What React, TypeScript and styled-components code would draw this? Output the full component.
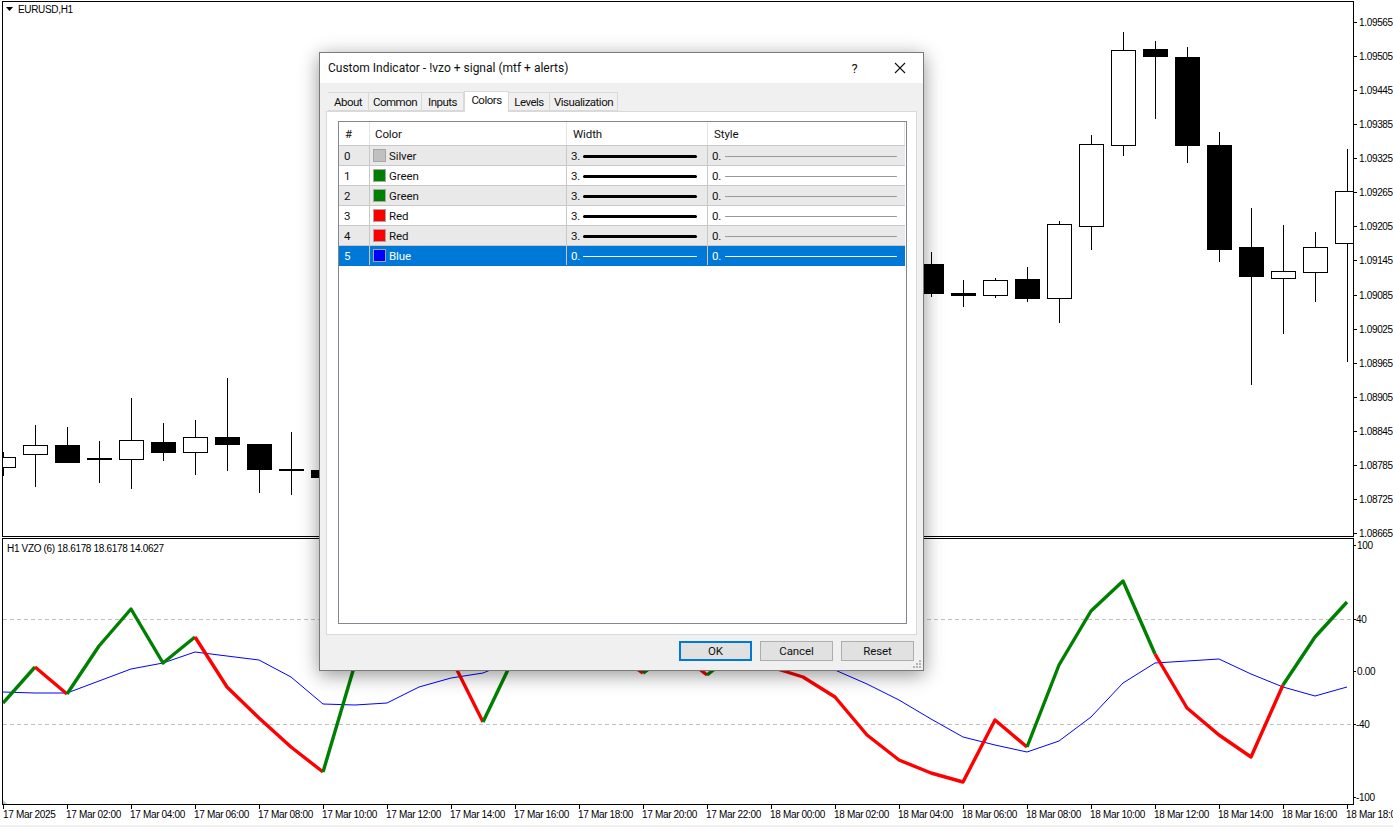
import React from 'react';
import styled, { createGlobalStyle } from 'styled-components';

const GlobalStyle = createGlobalStyle`
  html, body {
    margin: 0;
    padding: 0;
    background: #ffffff;
  }
`;

const UI_FONT = `Roboto, 'Noto Sans', 'Liberation Sans', sans-serif`;
const CHART_FONT = `'Liberation Sans', Arial, sans-serif`;

const Page = styled.div`
  position: relative;
  width: 1393px;
  height: 827px;
  overflow: hidden;
  background: #ffffff;
  display: flex;
  flex-direction: column;
`;

const ChartSvg = styled.svg`
  display: block;
  flex: none;
  text {
    font-family: ${CHART_FONT};
    font-size: 10px;
    letter-spacing: -0.33px;
    fill: #000000;
  }
`;

const BottomStrip = styled.div`
  flex: 1;
  background: #f0f0f0;
`;

const Dialog = styled.div`
  position: absolute;
  left: 319px;
  top: 52px;
  width: 605px;
  height: 619px;
  box-sizing: border-box;
  border: 1px solid #7a7a7a;
  background: #f0f0f0;
  box-shadow: 0 4px 18px rgba(0, 0, 0, 0.42);
  display: flex;
  flex-direction: column;
  font-family: ${UI_FONT};
  font-size: 11.5px;
  letter-spacing: -0.1px;
  color: #111111;
`;

const TitleBar = styled.div`
  height: 30px;
  flex: none;
  background: #ffffff;
  display: flex;
  align-items: center;
  padding-left: 8px;
`;

const Title = styled.div`
  flex: 1;
  font-size: 12px;
  letter-spacing: 0;
`;

const Help = styled.div`
  width: 45px;
  text-align: center;
  font-size: 13px;
`;

const CloseBox = styled.div`
  width: 45px;
  display: flex;
  justify-content: center;
  margin-right: 1px;
`;

const Tabs = styled.div`
  display: flex;
  align-items: flex-end;
  height: 28px;
  flex: none;
  padding-left: 8px;
  position: relative;
  z-index: 1;
`;

const Tab = styled.div<{ $active?: boolean; $w: number }>`
  box-sizing: border-box;
  width: ${p => p.$w}px;
  height: ${p => (p.$active ? 21 : 19)}px;
  margin-bottom: ${p => (p.$active ? -1 : 0)}px;
  padding-bottom: ${p => (p.$active ? 4 : 0)}px;
  letter-spacing: -0.5px;
  background: ${p => (p.$active ? '#ffffff' : '#f0f0f0')};
  border: 1px solid #d9d9d9;
  border-bottom: ${p => (p.$active ? 'none' : '1px solid #d9d9d9')};
  border-left: ${p => (p.$active ? '1px solid #d9d9d9' : 'none')};
  display: flex;
  align-items: center;
  justify-content: center;
`;

const TabPanel = styled.div`
  margin: 0 6px;
  height: 524px;
  flex: none;
  box-sizing: border-box;
  background: #ffffff;
  border: 1px solid #d9d9d9;
  padding: 9px 9px 10px 11px;
  display: flex;
`;

const ListBox = styled.div`
  flex: 1;
  box-sizing: border-box;
  border: 1px solid #828790;
  background: #ffffff;
  padding-right: 1px;
`;

const Row = styled.div<{ $bg?: string; $head?: boolean; $selected?: boolean }>`
  display: grid;
  grid-template-columns: 31px 197px 141px 1fr;
  height: ${p => (p.$head ? 24 : 20)}px;
  box-sizing: border-box;
  border-bottom: 1px solid ${p => (p.$selected ? '#0078d7' : '#c8c8c8')};
  background: ${p => (p.$selected ? '#0078d7' : p.$bg || '#ffffff')};
  color: ${p => (p.$selected ? '#ffffff' : '#111111')};
`;

const Cell = styled.div<{ $pad: number; $head?: boolean }>`
  display: flex;
  align-items: center;
  padding-left: ${p => p.$pad}px;
  border-right: 1px solid ${p => (p.$head ? '#e5e5e5' : '#c8c8c8')};
  min-width: 0;
`;

const LastCell = styled(Cell)`
  border-right: ${p => (p.$head ? '1px solid #e5e5e5' : 'none')};
`;

const Swatch = styled.span<{ $color: string }>`
  width: 13px;
  height: 13px;
  box-sizing: border-box;
  flex: none;
  border: 1px solid #a6a6a6;
  background: ${p => p.$color};
  margin-right: 3px;
`;

const Value = styled.span<{ $w: number }>`
  width: ${p => p.$w}px;
  flex: none;
`;

const LineSample = styled.span<{ $w: number; $thick?: boolean; $selected?: boolean }>`
  width: ${p => p.$w}px;
  height: ${p => (p.$thick ? 3 : 1)}px;
  margin-top: 1px;
  flex: none;
  border-radius: 2px;
  background: ${p => (p.$selected ? '#ffffff' : p.$thick ? '#000000' : '#999999')};
`;

const Footer = styled.div`
  flex: 1;
  display: flex;
  justify-content: flex-end;
  align-items: flex-start;
  gap: 8px;
  padding: 6px 9px 0 0;
`;

const Button = styled.div<{ $primary?: boolean }>`
  width: 73px;
  height: 20px;
  box-sizing: border-box;
  background: #e1e1e1;
  border: ${p => (p.$primary ? '2px solid #0078d7' : '1px solid #adadad')};
  display: flex;
  align-items: center;
  justify-content: center;
`;

const Grip = styled.svg`
  position: absolute;
  right: 1px;
  bottom: 1px;
`;

const W = 32;
const cx = (k: number) => 3 + W * k;

type Candle = { k: number; o: number; c: number; hi: number; lo: number; up: boolean };

const candles: Candle[] = [
  { k: 0, o: 457, c: 467, hi: 452, lo: 476, up: true },
  { k: 1, o: 445, c: 454, hi: 425, lo: 487, up: true },
  { k: 2, o: 445, c: 463, hi: 427, lo: 463, up: false },
  { k: 3, o: 458, c: 460, hi: 441, lo: 483, up: false },
  { k: 4, o: 440, c: 459, hi: 398, lo: 489, up: true },
  { k: 5, o: 442, c: 453, hi: 423, lo: 461, up: false },
  { k: 6, o: 437, c: 452, hi: 420, lo: 475, up: true },
  { k: 7, o: 437, c: 445, hi: 378, lo: 471, up: false },
  { k: 8, o: 444, c: 470, hi: 444, lo: 493, up: false },
  { k: 9, o: 469, c: 471, hi: 432, lo: 495, up: false },
  { k: 10, o: 470, c: 478, hi: 470, lo: 478, up: false },
  { k: 29, o: 264, c: 294, hi: 252, lo: 297, up: false },
  { k: 30, o: 293, c: 296, hi: 280, lo: 307, up: false },
  { k: 31, o: 280, c: 295, hi: 278, lo: 298, up: true },
  { k: 32, o: 279, c: 299, hi: 267, lo: 302, up: false },
  { k: 33, o: 224, c: 298, hi: 221, lo: 323, up: true },
  { k: 34, o: 144, c: 226, hi: 135, lo: 250, up: true },
  { k: 35, o: 50, c: 145, hi: 32, lo: 156, up: true },
  { k: 36, o: 49, c: 57, hi: 41, lo: 119, up: false },
  { k: 37, o: 57, c: 146, hi: 47, lo: 163, up: false },
  { k: 38, o: 145, c: 250, hi: 132, lo: 262, up: false },
  { k: 39, o: 247, c: 277, hi: 208, lo: 385, up: false },
  { k: 40, o: 271, c: 278, hi: 225, lo: 334, up: true },
  { k: 41, o: 247, c: 272, hi: 232, lo: 302, up: true },
  { k: 42, o: 191, c: 243, hi: 149, lo: 362, up: true },
];

const prices = [
  ['1.09565', 22], ['1.09505', 56], ['1.09445', 90], ['1.09385', 124],
  ['1.09325', 158], ['1.09265', 192], ['1.09205', 226], ['1.09145', 260],
  ['1.09085', 295], ['1.09025', 329], ['1.08965', 363], ['1.08905', 397],
  ['1.08845', 431], ['1.08785', 465], ['1.08725', 499], ['1.08665', 533],
] as const;

const levels = [
  ['100', 545, 1357], ['40', 619, 1356], ['0.00', 671, 1357], ['-40', 724, 1356], ['-100', 797, 1356],
] as const;

const G = '#008000';
const R = '#ff0000';

// [first slot, colour, y per slot]
const vzoRuns: [number, string, number[]][] = [
  [0, G, [703, 667]],
  [1, R, [667, 694]],
  [2, G, [694, 646, 609, 663, 637]],
  [6, R, [637, 687, 718, 747, 772]],
  [10, G, [772, 664]],
  [14, R, [658, 722]],
  [15, G, [722, 655]],
  [19, R, [650, 673]],
  [20, G, [673, 650]],
  [21, R, [650, 675]],
  [22, G, [675, 650]],
  [23, R, [650, 667, 677, 697, 735, 760, 773, 782, 720, 747]],
  [32, G, [747, 665, 611, 581, 654]],
  [36, R, [654, 708, 735, 757, 685]],
  [40, G, [685, 637, 602]],
];

const signal = [
  692, 693, 693, 681, 669, 663, 652, 656, 660, 677, 704, 705, 703, 687, 678, 673, 660,
];
const signalRight: [number, number[]] = [
  26, [670, 684, 700, 719, 737, 745, 752, 741, 717, 683, 663, 661, 659, 674, 687, 696, 687],
];

const toPts = (start: number, ys: number[]) => ys.map((y, i) => `${cx(start + i)},${y}`).join(' ');

const timeLabels = [
  '17 Mar 2025', '17 Mar 02:00', '17 Mar 04:00', '17 Mar 06:00', '17 Mar 08:00', '17 Mar 10:00',
  '17 Mar 12:00', '17 Mar 14:00', '17 Mar 16:00', '17 Mar 18:00', '17 Mar 20:00', '17 Mar 22:00',
  '18 Mar 00:00', '18 Mar 02:00', '18 Mar 04:00', '18 Mar 06:00', '18 Mar 08:00', '18 Mar 10:00',
  '18 Mar 12:00', '18 Mar 14:00', '18 Mar 16:00', '18 Mar 18:00',
];

function PriceChart() {
  return (
    <ChartSvg width={1393} height={537} viewBox="0 0 1393 537">
      <defs>
        <clipPath id="plot"><rect x={3} y={2} width={1350} height={534} /></clipPath>
      </defs>
      <g clipPath="url(#plot)" shapeRendering="crispEdges">
        {candles.map(c => (
          <g key={c.k}>
            <line x1={cx(c.k) + 0.5} x2={cx(c.k) + 0.5} y1={c.hi} y2={c.lo} stroke="#000" />
            {c.up ? (
              <rect x={cx(c.k) - 11.5} y={c.o + 0.5} width={24} height={c.c - c.o} fill="#fff" stroke="#000" />
            ) : (
              <rect x={cx(c.k) - 12} y={c.o} width={25} height={c.c - c.o} fill="#000" />
            )}
          </g>
        ))}
      </g>
      <g shapeRendering="crispEdges" stroke="#000" fill="none">
        <path d="M2.5 536.5V1.5H1353.5V536.5H2.5" />
        {prices.map(([, y]) => <line key={y} x1={1353} x2={1357} y1={y + 0.5} y2={y + 0.5} />)}
      </g>
      <path d="M6 7h7l-3.5 4z" fill="#000" />
      <text x={18} y={12.5}>EURUSD,H1</text>
      {prices.map(([p, y]) => <text key={p} x={1359} y={y + 3.5}>{p}</text>)}
    </ChartSvg>
  );
}

function IndicatorChart() {
  return (
    <ChartSvg width={1393} height={268} viewBox="0 537 1393 268">
      <defs>
        <clipPath id="sub"><rect x={3} y={539} width={1350} height={265} /></clipPath>
      </defs>
      <g shapeRendering="crispEdges" stroke="#c0c0c0" strokeDasharray="4 3">
        <line x1={3} x2={1353} y1={619.5} y2={619.5} />
        <line x1={3} x2={1353} y1={724.5} y2={724.5} />
      </g>
      <g clipPath="url(#sub)" fill="none">
        <polyline points={toPts(0, signal)} stroke="#0000ff" strokeWidth={1} />
        <polyline points={toPts(signalRight[0], signalRight[1])} stroke="#0000ff" strokeWidth={1} />
        {vzoRuns.map(([start, color, ys]) => (
          <polyline key={start} points={toPts(start, ys)} stroke={color} strokeWidth={3.4} strokeLinejoin="round" />
        ))}
      </g>
      <g shapeRendering="crispEdges" stroke="#000" fill="none">
        <path d="M2.5 804.5V538.5H1353.5V804.5H2.5" />
        {[545, 619, 671, 724, 797].map(y => <line key={y} x1={1353} x2={1356} y1={y + 0.5} y2={y + 0.5} />)}
      </g>
      <path d="M3 800l4 4H3z" fill="#c0c0c0" />
      <text x={7} y={551.5}>H1 VZO (6) 18.6178 18.6178 14.0627</text>
      {levels.map(([t, y, x]) => <text key={t} x={x} y={y + 3.5}>{t}</text>)}
    </ChartSvg>
  );
}

function TimeAxis() {
  return (
    <ChartSvg width={1393} height={20} viewBox="0 805 1393 20">
      {timeLabels.map((t, i) => (
        <g key={t}>
          <line x1={3.5 + 64 * i} x2={3.5 + 64 * i} y1={805} y2={809} stroke="#000" shapeRendering="crispEdges" />
          <text x={i === 0 ? 3 : 2 + 64 * i} y={818}>{t}</text>
        </g>
      ))}
    </ChartSvg>
  );
}

const tabs = [
  { name: 'About', w: 41 },
  { name: 'Common', w: 53 },
  { name: 'Inputs', w: 42 },
  { name: 'Colors', w: 45, active: true },
  { name: 'Levels', w: 41 },
  { name: 'Visualization', w: 68 },
];

const rows = [
  { name: 'Silver', color: '#c0c0c0', width: '3.' },
  { name: 'Green', color: '#008000', width: '3.' },
  { name: 'Green', color: '#008000', width: '3.' },
  { name: 'Red', color: '#ff0000', width: '3.' },
  { name: 'Red', color: '#ff0000', width: '3.' },
  { name: 'Blue', color: '#0000ff', width: '0.' },
];

function IndicatorDialog() {
  return (
    <Dialog>
      <TitleBar>
        <Title>Custom Indicator - !vzo + signal (mtf + alerts)</Title>
        <Help>?</Help>
        <CloseBox>
          <svg width="12" height="12" viewBox="0 0 12 12">
            <path d="M1 1l10 10M11 1L1 11" stroke="#111" strokeWidth="1.1" fill="none" />
          </svg>
        </CloseBox>
      </TitleBar>
      <Tabs>
        {tabs.map(t => <Tab key={t.name} $w={t.w} $active={t.active}>{t.name}</Tab>)}
      </Tabs>
      <TabPanel>
        <ListBox>
          <Row $head>
            <Cell $head $pad={6}>#</Cell>
            <Cell $head $pad={5}>Color</Cell>
            <Cell $head $pad={6}>Width</Cell>
            <LastCell $head $pad={6}>Style</LastCell>
          </Row>
          {rows.map((r, i) => {
            const selected = i === 5;
            return (
              <Row key={i} $bg={i % 2 === 0 ? '#e9e9e9' : '#ffffff'} $selected={selected}>
                <Cell $pad={5}>{i}</Cell>
                <Cell $pad={3}>
                  <Swatch $color={r.color} />
                  {r.name}
                </Cell>
                <Cell $pad={4}>
                  <Value $w={12}>{r.width}</Value>
                  <LineSample $w={114} $thick={r.width === '3.'} $selected={selected} />
                </Cell>
                <LastCell $pad={4}>
                  <Value $w={13}>0.</Value>
                  <LineSample $w={172} $selected={selected} />
                </LastCell>
              </Row>
            );
          })}
        </ListBox>
      </TabPanel>
      <Footer>
        <Button $primary>OK</Button>
        <Button>Cancel</Button>
        <Button>Reset</Button>
      </Footer>
      <Grip width="10" height="10" viewBox="0 0 10 10" fill="#b5b5b5">
        <rect x="7" y="1" width="2" height="2" />
        <rect x="4" y="4" width="2" height="2" />
        <rect x="7" y="4" width="2" height="2" />
        <rect x="1" y="7" width="2" height="2" />
        <rect x="4" y="7" width="2" height="2" />
        <rect x="7" y="7" width="2" height="2" />
      </Grip>
    </Dialog>
  );
}

export default function App() {
  return (
    <Page>
      <GlobalStyle />
      <PriceChart />
      <IndicatorChart />
      <TimeAxis />
      <BottomStrip />
      <IndicatorDialog />
    </Page>
  );
}
